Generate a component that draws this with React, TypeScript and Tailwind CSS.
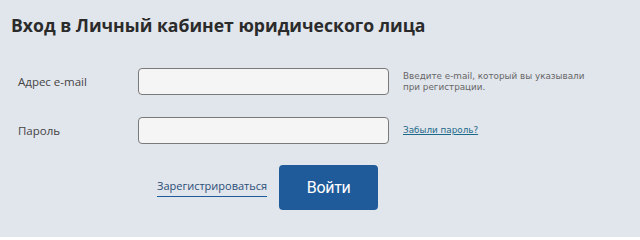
export default function App() {
  return (
    <div className="h-[237px] w-[640px] bg-[#e1e5ec] pl-[11px] pt-[12px] font-['Open_Sans',sans-serif] text-[#333]">
      <h1 className="text-[17.6px] font-bold leading-[26px] text-[#2b2b2b]">
        Вход в Личный кабинет юридического лица
      </h1>
      <div className="mt-[30px] pl-[7px]">
        <div className="flex items-center">
          <label className="w-[120px] text-[11.5px] text-[#444]">Адрес e-mail</label>
          <input className="h-[27px] w-[251px] rounded-[4px] border border-[#7a7a7a] bg-[#f5f5f5]" />
          <p className="ml-[14px] w-[200px] font-['DejaVu_Sans',sans-serif] text-[8.8px] leading-[11px] text-[#666]">
            Введите e-mail, который вы указывали при регистрации.
          </p>
        </div>
        <div className="mt-[22px] flex items-center">
          <label className="w-[120px] text-[11.5px] text-[#444]">Пароль</label>
          <input
            type="password"
            className="h-[27px] w-[251px] rounded-[4px] border border-[#7a7a7a] bg-[#f5f5f5]"
          />
          <a
            href="#"
            className="ml-[14px] font-['DejaVu_Sans',sans-serif] text-[8.8px] text-[#1d6a8a] underline"
          >
            Забыли пароль?
          </a>
        </div>
        <div className="mt-[21px] flex items-center pl-[139px]">
          <a href="#" className="border-b border-[#1f5b9a] pb-[2px] text-[11px] leading-[16px] text-[#2a4f78]">
            Зарегистрироваться
          </a>
          <button className="ml-[12px] h-[45px] w-[99px] rounded-[4px] bg-[#1f5b9a] font-['Roboto',sans-serif] text-[16px] tracking-[-0.3px] text-white">
            Войти
          </button>
        </div>
      </div>
    </div>
  );
}
